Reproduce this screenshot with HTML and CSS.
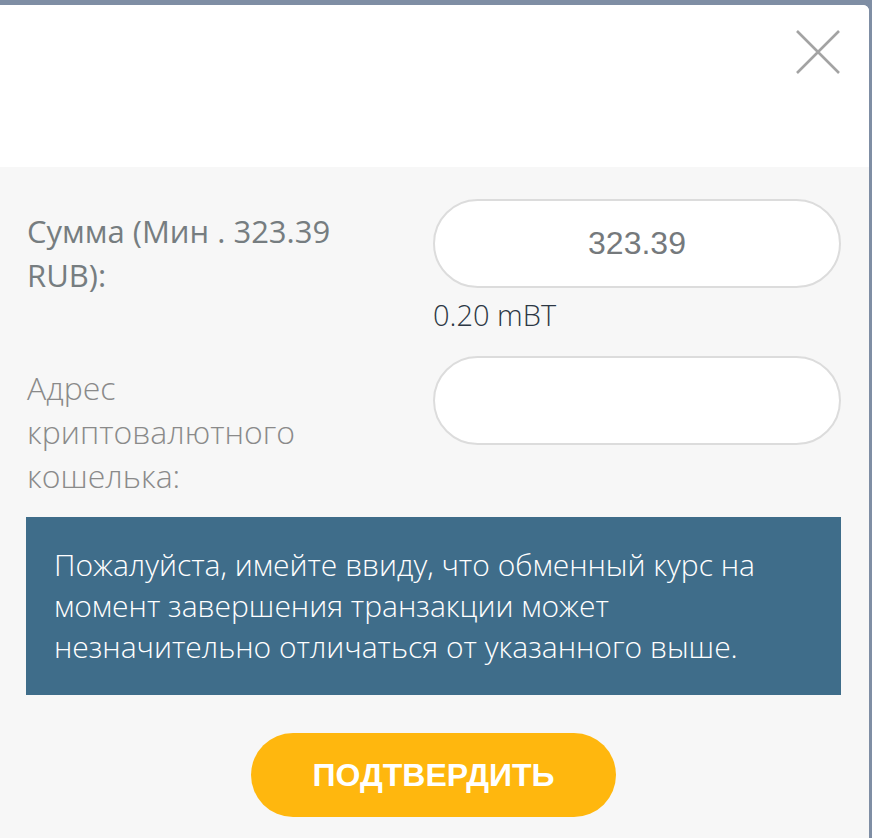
FILE: index.html
```html
<!DOCTYPE html>
<html lang="ru">
<head>
<meta charset="UTF-8">
<meta name="viewport" content="width=device-width, initial-scale=1.0">
<title>Вывод средств</title>
<link rel="stylesheet" href="styles.css">
</head>
<body>
<div class="modal">
  <div class="modal-header">
    <button class="close-btn" aria-label="Закрыть">
      <svg width="46" height="46" viewBox="0 0 46 46">
        <path d="M2 2 L44 44 M44 2 L2 44" stroke="#a3a3a3" stroke-width="2.6" fill="none"/>
      </svg>
    </button>
  </div>

  <div class="modal-body">
    <form class="withdraw-form">
      <label class="field-label strong" for="amount">Сумма (Мин . 323.39 RUB):</label>
      <div class="field">
        <input type="text" id="amount" class="pill-input" value="323.39">
        <div class="hint">0.20 mBT</div>
      </div>

      <label class="field-label" for="wallet">Адрес криптовалютного кошелька:</label>
      <div class="field">
        <input type="text" id="wallet" class="pill-input">
      </div>
    </form>

    <div class="notice">
      <p>Пожалуйста, имейте ввиду, что обменный курс на момент завершения транзакции может незначительно отличаться от указанного выше.</p>
    </div>

    <div class="actions">
      <button class="confirm-btn">ПОДТВЕРДИТЬ</button>
    </div>
  </div>
</div>
</body>
</html>
```

FILE: styles.css
```css
body {
  margin: 0;
  padding: 0;
  background-color: #7f8ea4;
  font-family: "Open Sans", Arial, sans-serif;
  height: 838px;
  overflow: hidden;
}

.modal {
  margin: 5px 3px 0 0;
  height: 833px;
  background-color: #f7f7f7;
  border-top-right-radius: 6px;
  overflow: hidden;
}

.modal-header {
  height: 162px;
  background-color: #fff;
  display: flex;
  justify-content: flex-end;
  align-items: flex-start;
  padding: 24px 28px 0 0;
  box-sizing: border-box;
}

.close-btn {
  background: none;
  border: none;
  padding: 0;
  cursor: pointer;
  line-height: 0;
}

.modal-body {
  padding: 32px 28px 0 26px;
}

.withdraw-form {
  display: grid;
  grid-template-columns: 407px 1fr;
  row-gap: 22px;
}

.field-label {
  font-size: 32px;
  line-height: 44px;
  font-weight: 300;
  color: #8a8a8a;
  padding: 10px 60px 0 1px;
}

.field-label.strong {
  font-size: 31px;
  font-weight: 500;
  color: #767d80;
}

.pill-input {
  display: block;
  width: 100%;
  height: 89px;
  box-sizing: border-box;
  border: 2px solid #dcdcdc;
  border-radius: 45px;
  background-color: #fff;
  text-align: center;
  font-family: "Liberation Sans", Arial, sans-serif;
  font-size: 32px;
  color: #75797c;
  outline: none;
}

.hint {
  margin-top: 8px;
  font-size: 29px;
  line-height: 38px;
  font-weight: 300;
  color: #2c3744;
}

.notice {
  margin-top: 19px;
  background-color: #3f6d8a;
  padding: 27px 50px 28px 28px;
}

.notice p {
  margin: 0;
  color: #fff;
  font-size: 30px;
  line-height: 41px;
  font-weight: 300;
}

.actions {
  display: flex;
  justify-content: center;
  margin-top: 38px;
}

.confirm-btn {
  width: 365px;
  height: 84px;
  border: none;
  border-radius: 42px;
  background-color: #ffb70e;
  color: #fff;
  font-family: "Liberation Sans", Arial, sans-serif;
  font-size: 32px;
  font-weight: bold;
  cursor: pointer;
}
```
